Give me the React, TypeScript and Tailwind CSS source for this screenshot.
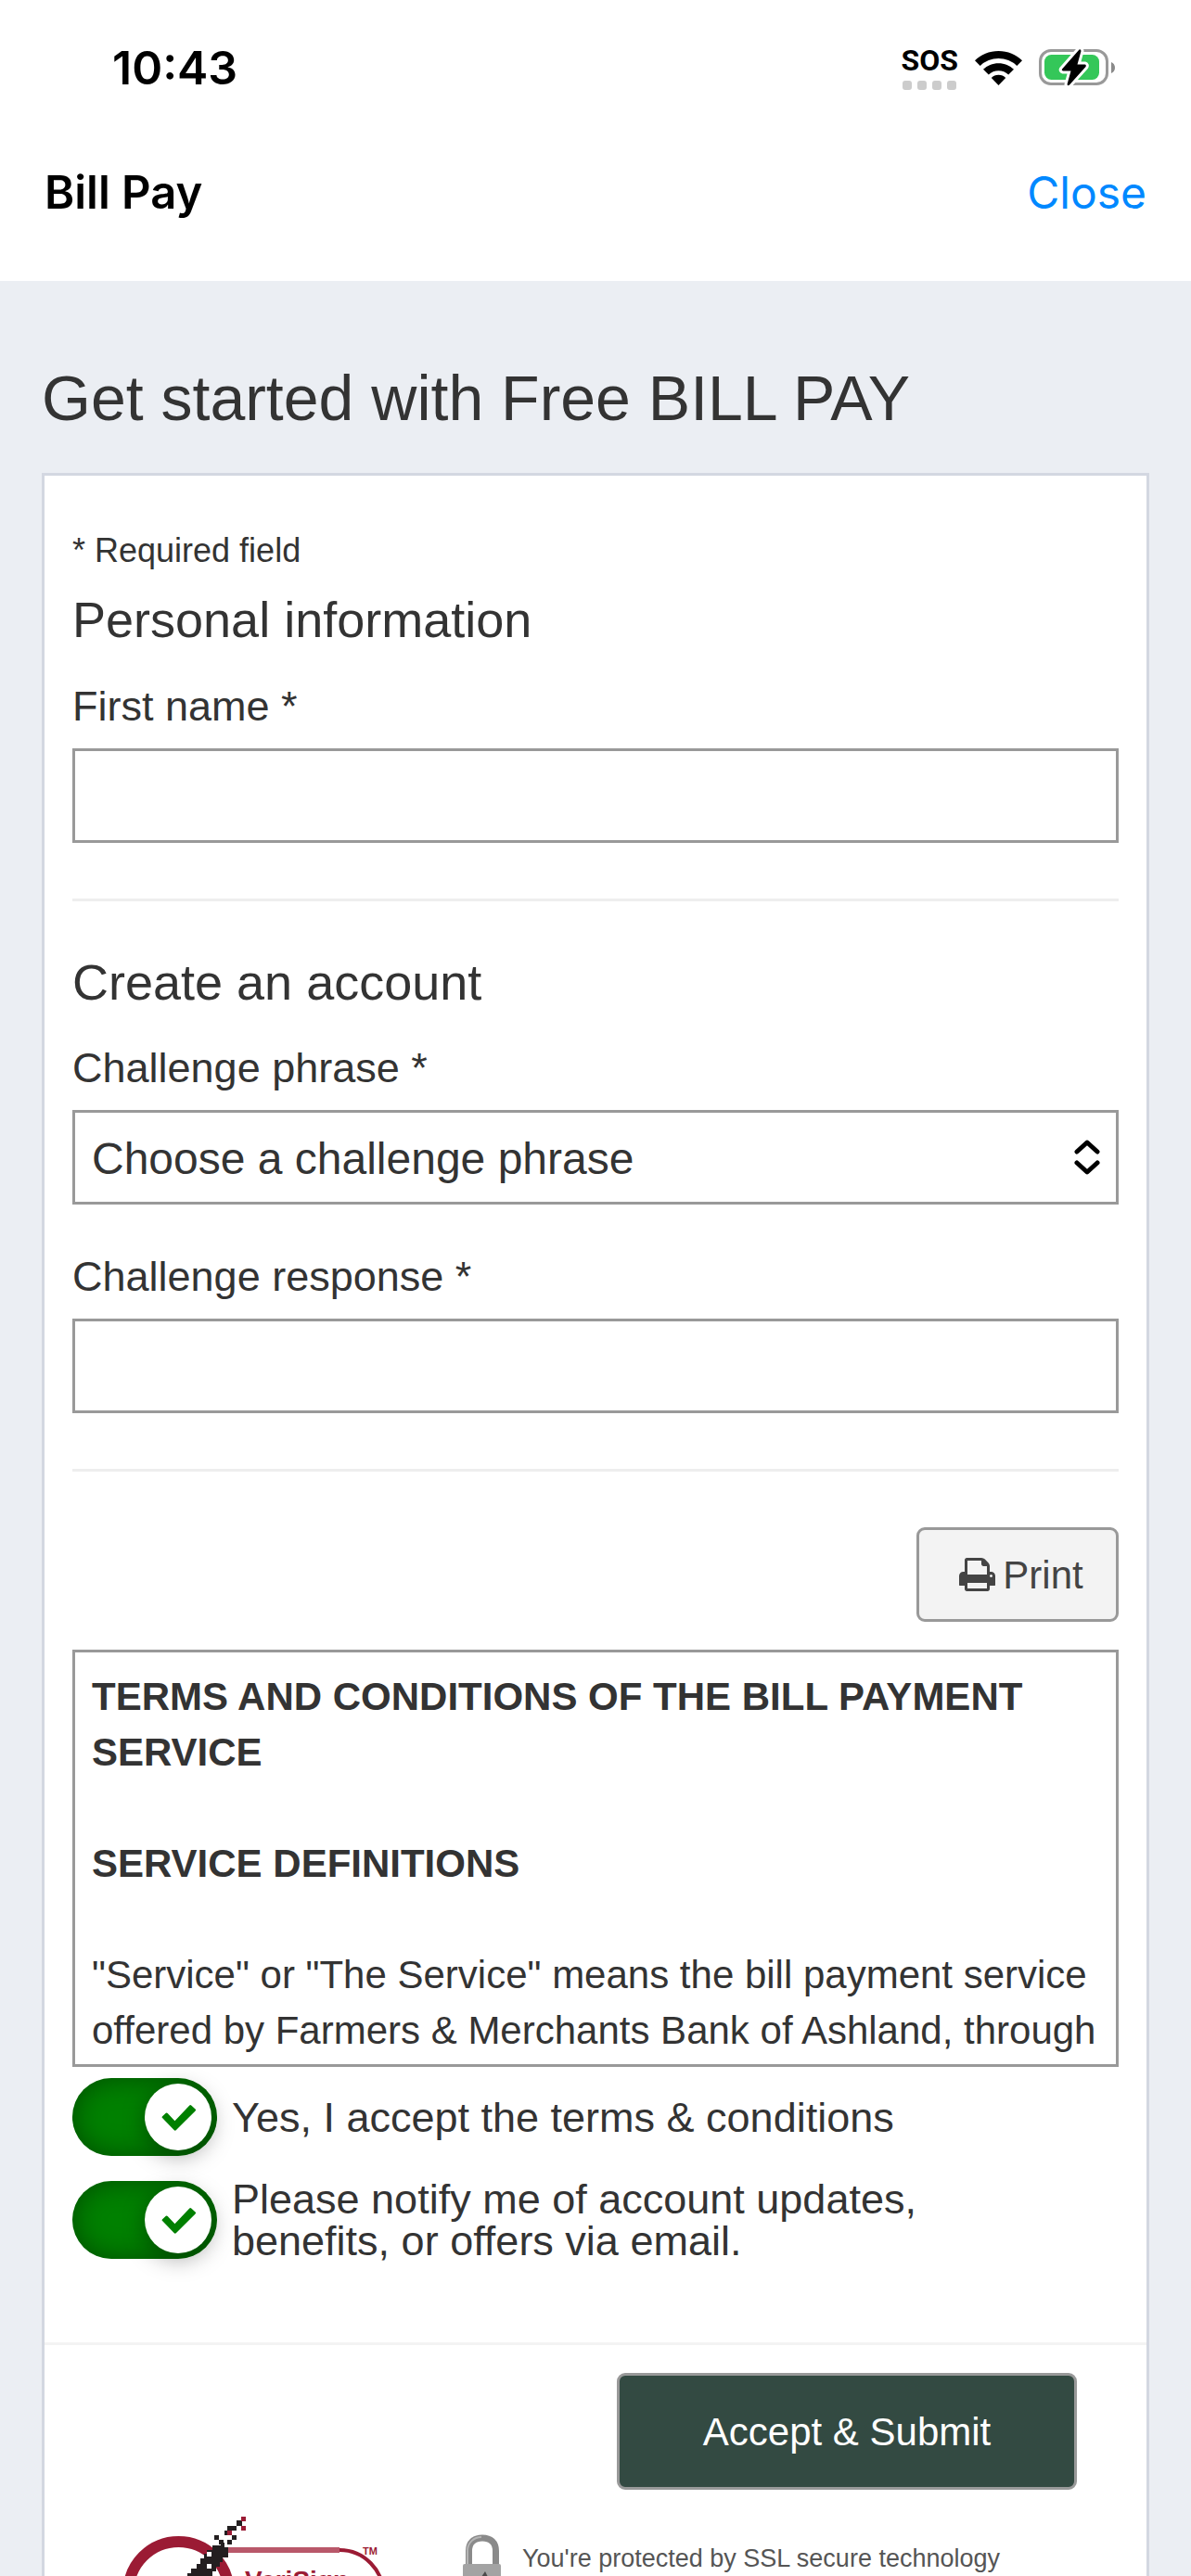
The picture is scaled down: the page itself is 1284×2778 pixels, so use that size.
import React, { useState } from 'react';

const VERISIGN_RED = '#9b1b34';

const WifiIcon = () => (
  <svg viewBox="0 0 51 37" className="w-[51px] h-[37px]" aria-hidden="true">
    <path d="M25.500 0C35.500 0 44.500 3.900 51 10.200L45.300 16A28.500 28.500 0 0 0 5.700 16L0 10.200C6.500 3.900 15.500 0 25.500 0Z" />
    <path d="M25.500 13.200C31.900 13.200 37.700 15.700 42 19.800L36.200 25.600A15.500 15.500 0 0 0 14.800 25.600L9 19.800C13.300 15.700 19.100 13.200 25.500 13.200Z" />
    <path d="M25.500 25.800C28.600 25.800 31.200 26.900 33.200 28.900L25.500 37L17.800 28.900C19.800 26.900 22.400 25.800 25.500 25.800Z" />
  </svg>
);

const BatteryIcon = () => (
  <svg viewBox="0 0 83 42" className="w-[83px] h-[42px]" aria-hidden="true">
    <rect x="1.500" y="2.500" width="72" height="36" rx="11.500" fill="none" stroke="#999" strokeWidth="3" />
    <rect x="6" y="7" width="59" height="27" rx="7.500" fill="#34c759" />
    <path d="M78 15V27C80.500 26 82 23.700 82 21S80.500 16 78 15Z" fill="#8a8a8a" />
    <path
      d="M43.500 1.500L25 22.500Q24 24 26 24.500H34.500L30.500 39Q31 41 33 39.500L50.500 20Q51.500 18 49.500 17.500H41.500L45.500 3Q45 0.500 43.500 1.500Z"
      stroke="#fff"
      strokeWidth="6"
      strokeLinejoin="round"
      paintOrder="stroke"
    />
  </svg>
);

const PrintIcon = () => (
  <svg viewBox="0 128 1664 1536" className="w-[39px] h-[36px]" fill="currentColor" aria-hidden="true">
    <path d="M384 1536h896v-256h-896v256zM384 896h896v-384h-160q-40 0-68-28t-28-68v-160h-640v640zM1536 960q0-26-19-45t-45-19-45 19-19 45 19 45 45 19 45-19 19-45zM1664 960v416q0 13-9.500 22.500t-22.500 9.500h-224v160q0 40-28 68t-68 28h-960q-40 0-68-28t-28-68v-160h-224q-13 0-22.500-9.500t-9.500-22.500v-416q0-79 56.500-135.500t135.500-56.500h64v-544q0-40 28-68t68-28h672q40 0 88 20t76 48l152 152q28 28 48 76t20 88v256h64q79 0 135.500 56.500t56.500 135.500z" />
  </svg>
);

const VeriSignLogo = () => (
  <svg viewBox="0 0 290 140" className="w-[290px] h-[140px] shrink-0" role="img" aria-label="VeriSign Secured">
    <path d="M112 41H236C262 41 284 62 284 92" fill="none" stroke={VERISIGN_RED} strokeWidth="4" />
    <path d="M112 41H236" stroke="#b9586a" strokeWidth="6" />
    <circle cx="62.500" cy="86" r="54" fill="#fff" stroke={VERISIGN_RED} strokeWidth="12" />
    <g fill="#231f20">
      <path d="M102 36H108V33H112V38H116V49H110V54H107V59H103V64H99V69H96V80H62V76H67V71H72V66H76V61H82V56H86V50H90V45H93V41H99V36Z" />
      <path d="M112 24V20H115V15H125V20H120V25H112Z" />
      <rect x="125" y="9" width="6" height="6" />
      <rect x="101" y="25" width="5" height="5" />
      <rect x="106" y="30" width="5" height="5" />
      <rect x="115" y="30" width="5" height="5" />
      <rect x="120" y="25" width="5" height="5" />
    </g>
    <g fill={VERISIGN_RED}>
      <rect x="130" y="5" width="5" height="5" />
      <rect x="130" y="15" width="5" height="5" />
      <rect x="115" y="20" width="5" height="5" />
    </g>
    <rect x="93" y="43" width="5" height="5" fill="#fff" />
    <rect x="93" y="56" width="5" height="5" fill="#fff" />
    <text x="261" y="46" fontSize="11" fontWeight="700" fill={VERISIGN_RED}>TM</text>
    <text x="134" y="83" fontSize="28" fontWeight="700" fill={VERISIGN_RED}>VeriSign</text>
  </svg>
);

const LockIcon = () => (
  <svg viewBox="0 0 42 80" className="w-[42px] h-[80px] shrink-0" aria-hidden="true">
    <path d="M6.500 34V18C6.500 9 12 4 21 4S35.500 9 35.500 18V34" fill="none" stroke="#8a8a8a" strokeWidth="7" />
    <path d="M5 34V18C5 9 12 3 20 3" fill="none" stroke="#b5b5b5" strokeWidth="2" />
    <rect x="0" y="32" width="41" height="44" rx="2" fill="#a3a3a3" />
    <path d="M24 40L27 46V56H20V46Z" fill="#4a4a4a" />
  </svg>
);

const TextField = ({ id, label }: { id: string; label: string }) => (
  <div>
    <label htmlFor={id} className="block text-[45px] leading-[54px] mb-[18px]">{label}</label>
    <input
      id={id}
      type="text"
      className="block w-full h-[102px] px-[18px] text-[48px] bg-white border-3 border-[#999] outline-none"
    />
  </div>
);

const Toggle = ({ id, children }: { id: string; children: React.ReactNode }) => {
  const [checked, setChecked] = useState(true);

  return (
    <div className="flex items-center gap-4">
      <span className={`relative flex items-center w-[156px] h-[84px] px-[6px] shrink-0 rounded-full shadow-[inset_0_0_30px_rgba(0,0,0,0.4)] ${checked ? 'justify-end bg-[#008000]' : 'justify-start bg-gray-400'}`}>
        <input
          id={id}
          type="checkbox"
          checked={checked}
          onChange={(e) => setChecked(e.target.checked)}
          className="absolute inset-0 w-full h-full appearance-none cursor-pointer"
        />
        <span className="flex items-center justify-center size-[72px] rounded-full bg-white shadow-[0_6px_24px_rgba(0,0,0,0.35)] pointer-events-none">
          {checked && (
            <svg viewBox="0 0 110 86" className="w-[37px] h-[29px]" aria-hidden="true">
              <path d="M17 32L43 60L93 7L106 19L44 81L6 42Z" fill="#008000" stroke="#008000" strokeWidth="8" strokeLinejoin="round" />
            </svg>
          )}
        </span>
      </span>
      <label htmlFor={id} className="text-[45px] leading-[45px] max-w-[800px]">{children}</label>
    </div>
  );
};

const Divider = () => <hr className="my-[60px] border-0 h-[3px] bg-[#eee]" />;

const App: React.FC = () => {
  return (
    <div className="h-screen flex flex-col overflow-hidden bg-[#ebeef3] text-[#333] font-['Liberation_Sans',Arial,sans-serif]">
      <header className="shrink-0 bg-white text-black font-['Inter',sans-serif]">
        <div className="flex items-center justify-between h-[146px] pl-[121px] pr-[81px]">
          <span className="text-[50px] font-semibold">10:43</span>
          <div className="flex items-center gap-[18px]">
            <div className="flex flex-col items-center gap-[6px]">
              <span className="text-[32px] leading-[32px] font-bold font-['Roboto',sans-serif]">SOS</span>
              <div className="flex gap-[6px]">
                <span className="size-[10px] rounded-[3px] bg-[#ccc]" />
                <span className="size-[10px] rounded-[3px] bg-[#ccc]" />
                <span className="size-[10px] rounded-[3px] bg-[#ccc]" />
                <span className="size-[10px] rounded-[3px] bg-[#ccc]" />
              </div>
            </div>
            <WifiIcon />
            <BatteryIcon />
          </div>
        </div>
        <div className="flex items-center justify-between h-[157px] px-12 pb-[33px]">
          <h1 className="text-[49px] font-semibold">Bill Pay</h1>
          <button type="button" className="text-[48px] text-[#0088ff]">Close</button>
        </div>
      </header>

      <main className="flex-1 min-h-0 overflow-hidden px-[45px] pt-[90px]">
        <h2 className="text-[68px] leading-[72px] mb-[45px]">Get started with Free BILL PAY</h2>

        <form className="bg-white border-3 border-[#d3d7e1]" onSubmit={(e) => e.preventDefault()}>
          <div className="px-[30px] pt-[54px] pb-[87px]">
            <p className="text-[36px] leading-[54px]">* Required field</p>

            {/* Personal information */}
            <h3 className="text-[54px] leading-[54px] mt-5 mb-10">Personal information</h3>
            <TextField id="first-name" label="First name *" />

            <Divider />

            {/* Account */}
            <h3 className="text-[54px] leading-[54px] mb-[39px]">Create an account</h3>
            <label htmlFor="challenge-phrase" className="block text-[45px] leading-[54px] mb-[18px]">Challenge phrase *</label>
            <div className="relative mb-[51px]">
              <select
                id="challenge-phrase"
                className="block w-full h-[102px] pt-1 pl-[18px] pr-20 text-[48px] bg-white border-3 border-[#999] appearance-none"
              >
                <option>Choose a challenge phrase</option>
              </select>
              <svg viewBox="0 0 28 38" className="absolute right-5 top-8 w-[28px] h-[38px] pointer-events-none" fill="none" stroke="#000" strokeWidth="5" strokeLinecap="round" strokeLinejoin="round" aria-hidden="true">
                <path d="M3 13L14 3L25 13M3 25L14 35L25 25" />
              </svg>
            </div>
            <TextField id="challenge-response" label="Challenge response *" />

            <Divider />

            {/* Terms */}
            <div className="flex justify-end mb-[30px]">
              <button type="button" className="flex items-center justify-center gap-2 w-[218px] h-[102px] pl-2 bg-[#f3f3f3] border-3 border-[#999] rounded-[9px] text-[42px] text-[#444]">
                <PrintIcon />
                Print
              </button>
            </div>
            <div className="h-[450px] overflow-hidden px-[18px] pt-[18px] border-3 border-[#999] text-[42px] leading-[60px]">
              <p className="font-bold mb-[60px]">TERMS AND CONDITIONS OF THE BILL PAYMENT SERVICE</p>
              <p className="font-bold mb-[60px]">SERVICE DEFINITIONS</p>
              <p>"Service" or "The Service" means the bill payment service offered by Farmers &amp; Merchants Bank of Ashland, through</p>
            </div>

            <div className="flex flex-col gap-6 mt-3">
              <Toggle id="accept-terms">Yes, I accept the terms &amp; conditions</Toggle>
              <Toggle id="notify-updates">Please notify me of account updates, benefits, or offers via email.</Toggle>
            </div>
          </div>

          <div className="border-t-3 border-[#f3f3f3] pt-[30px]">
            <div className="flex justify-end px-[75px]">
              <button type="submit" className="w-[496px] h-[126px] bg-[#334a42] border-3 border-[#999] rounded-[9px] text-[42px] text-white">
                Accept &amp; Submit
              </button>
            </div>
            <div className="flex items-start pl-[82px] pt-6">
              <VeriSignLogo />
              <div className="flex items-start gap-[22px] pl-[79px] pt-6">
                <LockIcon />
                <p className="pt-2 text-[27px] leading-[36px] text-[#555]">You're protected by SSL secure technology</p>
              </div>
            </div>
          </div>
        </form>
      </main>
    </div>
  );
};

export default App;
